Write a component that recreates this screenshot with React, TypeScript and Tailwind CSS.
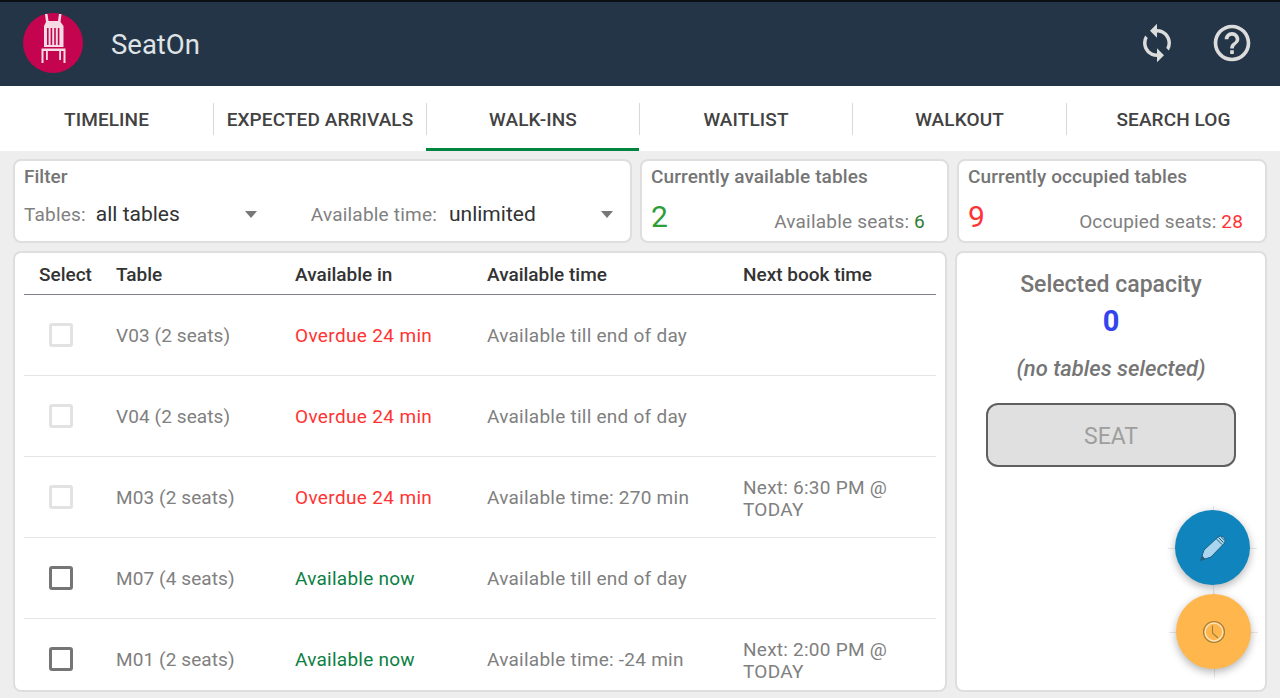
import { MdSync, MdHelpOutline } from 'react-icons/md';

interface Row {
    table: string;
    status: string;
    statusClass: string;
    time: string;
    next?: string;
    enabled: boolean;
}

const tabs = ['TIMELINE', 'EXPECTED ARRIVALS', 'WALK-INS', 'WAITLIST', 'WALKOUT', 'SEARCH LOG'];

const rows: Row[] = [
    { table: 'V03 (2 seats)', status: 'Overdue 24 min', statusClass: 'text-[#ff3333] tracking-[0.35px]', time: 'Available till end of day', enabled: false },
    { table: 'V04 (2 seats)', status: 'Overdue 24 min', statusClass: 'text-[#ff3333] tracking-[0.35px]', time: 'Available till end of day', enabled: false },
    { table: 'M03 (2 seats)', status: 'Overdue 24 min', statusClass: 'text-[#ff3333] tracking-[0.35px]', time: 'Available time: 270 min', next: 'Next: 6:30 PM @ TODAY', enabled: false },
    { table: 'M07 (4 seats)', status: 'Available now', statusClass: 'text-[#0b8043] tracking-[0.25px]', time: 'Available till end of day', enabled: true },
    { table: 'M01 (2 seats)', status: 'Available now', statusClass: 'text-[#0b8043] tracking-[0.25px]', time: 'Available time: -24 min', next: 'Next: 2:00 PM @ TODAY', enabled: true },
];

const ChairLogo = () => (
    <svg viewBox="0 0 60 60" className="w-[60px] h-[60px]">
        <circle cx="30" cy="30" r="30" fill="#c4044e" />
        <g fill="#f6dbe5">
            <path d="M22 1 H24.5 L25.5 8 H35 L36 1 H38.5 L37.5 9 L40.5 13 V34 H21 V13 L23 9 Z" />
            <rect x="18.5" y="35.5" width="24" height="2.5" />
            <rect x="18.5" y="38" width="2" height="12" />
            <rect x="40.5" y="38" width="2" height="12" />
            <rect x="23" y="38" width="1.8" height="9" />
            <rect x="36.2" y="38" width="1.8" height="9" />
        </g>
        <g fill="#c4044e">
            <rect x="24" y="15" width="1.6" height="17" />
            <rect x="27.6" y="15" width="1.6" height="17" />
            <rect x="31.2" y="15" width="1.6" height="17" />
            <rect x="34.8" y="15" width="1.6" height="17" />
        </g>
    </svg>
);

const Arrow = () => <span className="w-0 h-0 border-x-[6px] border-x-transparent border-t-[7px] border-t-[#777777]" />;

const Crosshair = () => (
    <>
        <span className="absolute left-1/2 top-[-4px] h-[88px] w-px bg-[#e8e8e8]" />
        <span className="absolute top-1/2 left-[-7px] w-[89px] h-px bg-[#e8e8e8]" />
    </>
);

export default function App() {
    return (
        <div className="w-[1280px] h-[698px] overflow-hidden flex flex-col bg-[#eeeeee] font-['Roboto',sans-serif]">
            <header className="h-[86px] shrink-0 bg-[#233547] border-t-2 border-[#0c0f12] flex items-center pl-[23px] pr-[26px] pb-[2px]">
                <ChairLogo />
                <span className="ml-[28px] mt-[4px] text-[27.5px] text-[#dfe3e6]">SeatOn</span>
                <div className="ml-auto flex items-center gap-[32px] text-[#dcdcdc]">
                    <MdSync size={42} />
                    <MdHelpOutline size={44} />
                </div>
            </header>

            <nav className="h-[65px] shrink-0 bg-white grid grid-cols-[213px_213px_213px_213px_214px_214px]">
                {tabs.map((tab, i) => (
                    <div key={tab} className={`flex items-center justify-center h-full pt-[3px] border-b-[3px] ${i === 2 ? 'border-[#00843f]' : 'border-transparent'}`}>
                        <span className={`flex-1 h-[32px] pt-[4px] flex items-center justify-center text-[19px] tracking-[0.1px] font-medium text-[#424242] ${i > 0 ? 'border-l border-[#d8d8d8]' : ''}`}>
                            {tab}
                        </span>
                    </div>
                ))}
            </nav>

            <main className="flex-1 min-h-0 flex flex-col pl-[13px] pr-[13px] pt-[8px] pb-[6px] gap-[8px]">
                <div className="flex h-[84px] shrink-0">
                    <section className="w-[619px] bg-white border-2 border-[#dedede] rounded-lg pl-[9px] pt-[4px]">
                        <h3 className="text-[19px] leading-[24px] font-medium text-[#757575]">Filter</h3>
                        <div className="flex items-center mt-[13px] h-[24px] text-[19px] tracking-[0.2px]">
                            <span className="pt-[2px] text-[#808080]">Tables:</span>
                            <span className="ml-[10px] w-[149px] pt-[2px] text-[21px] tracking-normal text-[#333333]">all tables</span>
                            <Arrow />
                            <span className="ml-[54px] pt-[2px] text-[#808080]">Available time:</span>
                            <span className="ml-[12px] w-[152px] pt-[2px] text-[21px] tracking-normal text-[#333333]">unlimited</span>
                            <Arrow />
                        </div>
                    </section>
                    <section className="ml-[8px] w-[309px] bg-white border-2 border-[#dedede] rounded-lg pl-[9px] pr-[22px] pt-[4px]">
                        <h3 className="text-[19px] leading-[24px] tracking-[0.1px] font-medium text-[#757575]">Currently available tables</h3>
                        <div className="flex items-end justify-between mt-[11px] h-[34px]">
                            <span className="text-[30px] leading-[34px] pt-[1px] text-[#2e9e37]">2</span>
                            <span className="text-[19px] leading-[24px] tracking-[0.2px] text-[#808080]">Available seats: <span className="text-[#2e7d32]">6</span></span>
                        </div>
                    </section>
                    <section className="ml-[8px] w-[310px] bg-white border-2 border-[#dedede] rounded-lg pl-[9px] pr-[22px] pt-[4px]">
                        <h3 className="text-[19px] leading-[24px] tracking-[0.1px] font-medium text-[#757575]">Currently occupied tables</h3>
                        <div className="flex items-end justify-between mt-[11px] h-[34px]">
                            <span className="text-[30px] leading-[34px] pt-[1px] text-[#ff3333]">9</span>
                            <span className="text-[19px] leading-[24px] tracking-[0.15px] text-[#808080]">Occupied seats: <span className="text-[#ff3333]">28</span></span>
                        </div>
                    </section>
                </div>

                <div className="flex flex-1 min-h-0 gap-[8px]">
                    <section className="w-[934px] bg-white border-2 border-[#dedede] rounded-lg overflow-hidden px-[9px]">
                        <div className="flex h-[42px] pt-[4px] items-center border-b border-[#80808c] text-[19px] font-medium text-[#333333]">
                            <span className="w-[92px] pl-[15px]">Select</span>
                            <span className="w-[179px]">Table</span>
                            <span className="w-[192px]">Available in</span>
                            <span className="w-[256px]">Available time</span>
                            <span>Next book time</span>
                        </div>
                        {rows.map((row) => (
                            <div key={row.table} className="flex h-[81px] shrink-0 items-center border-b border-[#e6e6e6] text-[19px] tracking-[0.25px] text-[#808080]">
                                <div className="w-[92px] pl-[25px]">
                                    <span className={`block w-[24px] h-[24px] rounded-[3px] border-[3px] ${row.enabled ? 'border-[#757575]' : 'border-[#e2e2e2]'}`} />
                                </div>
                                <span className="w-[179px] pt-[2px] tracking-[0.1px]">{row.table}</span>
                                <span className={`w-[192px] pt-[2px] ${row.statusClass}`}>{row.status}</span>
                                <span className="w-[256px] pt-[2px]">{row.time}</span>
                                <span className="w-[170px] leading-[22px] pt-[3px]">{row.next}</span>
                            </div>
                        ))}
                    </section>

                    <aside className="relative w-[312px] bg-white border-2 border-[#dedede] rounded-lg flex flex-col items-center pt-[18px]">
                        <h3 className="text-[23px] leading-[28px] font-medium text-[#757575]">Selected capacity</h3>
                        <div className="mt-[6px] text-[29px] leading-[32px] font-bold text-[#3344ee]">0</div>
                        <div className="mt-[19px] text-[22px] leading-[26px] font-medium italic text-[#757575]">(no tables selected)</div>
                        <button className="mt-[21px] w-[250px] h-[64px] pt-[5px] rounded-[12px] border-2 border-[#5f5f5f] bg-[#e0e0e0] text-[23px] text-[#9e9e9e]">
                            SEAT
                        </button>

                        <div className="absolute left-[218px] top-[257px] w-[75px] h-[75px]">
                            <Crosshair />
                            <div className="relative w-[75px] h-[75px] rounded-full bg-[#0f84bd] shadow-[0_3px_8px_rgba(0,0,0,0.3)] flex items-center justify-center">
                                <svg viewBox="0 0 28 28" className="w-[28px] h-[28px]">
                                    <path d="M1.5 26.5 L5 16 L19 3 Q21.5 0.8 24.5 3 L25.5 4 Q27.5 7 25 9.5 L12 23 Z" fill="#a9d6ee" stroke="#1d5f82" strokeWidth="1" />
                                    <path d="M1.5 26.5 L3 21.5 L6.5 25 Z" fill="#1d5f82" />
                                    <path d="M17.5 5 L23 10.5 M19.5 3.5 L24.5 8.5 M21.8 2.5 L26 6.8" stroke="#1d5f82" strokeWidth="1" />
                                </svg>
                            </div>
                        </div>
                        <div className="absolute left-[219px] top-[341px] w-[75px] h-[75px]">
                            <Crosshair />
                            <div className="relative w-[75px] h-[75px] rounded-full bg-[#ffb74d] shadow-[0_3px_8px_rgba(0,0,0,0.3)] flex items-center justify-center">
                                <svg viewBox="0 0 24 24" className="w-[24px] h-[24px]" fill="none">
                                    <circle cx="12" cy="12" r="10.5" stroke="#a5803f" strokeWidth="1.2" />
                                    <circle cx="12" cy="12" r="8.8" stroke="#fbe6c2" strokeWidth="1.2" />
                                    <path d="M10.5 5.5 V13 L16 18" stroke="#a5803f" strokeWidth="1.2" />
                                </svg>
                            </div>
                        </div>
                    </aside>
                </div>
            </main>
        </div>
    );
}
